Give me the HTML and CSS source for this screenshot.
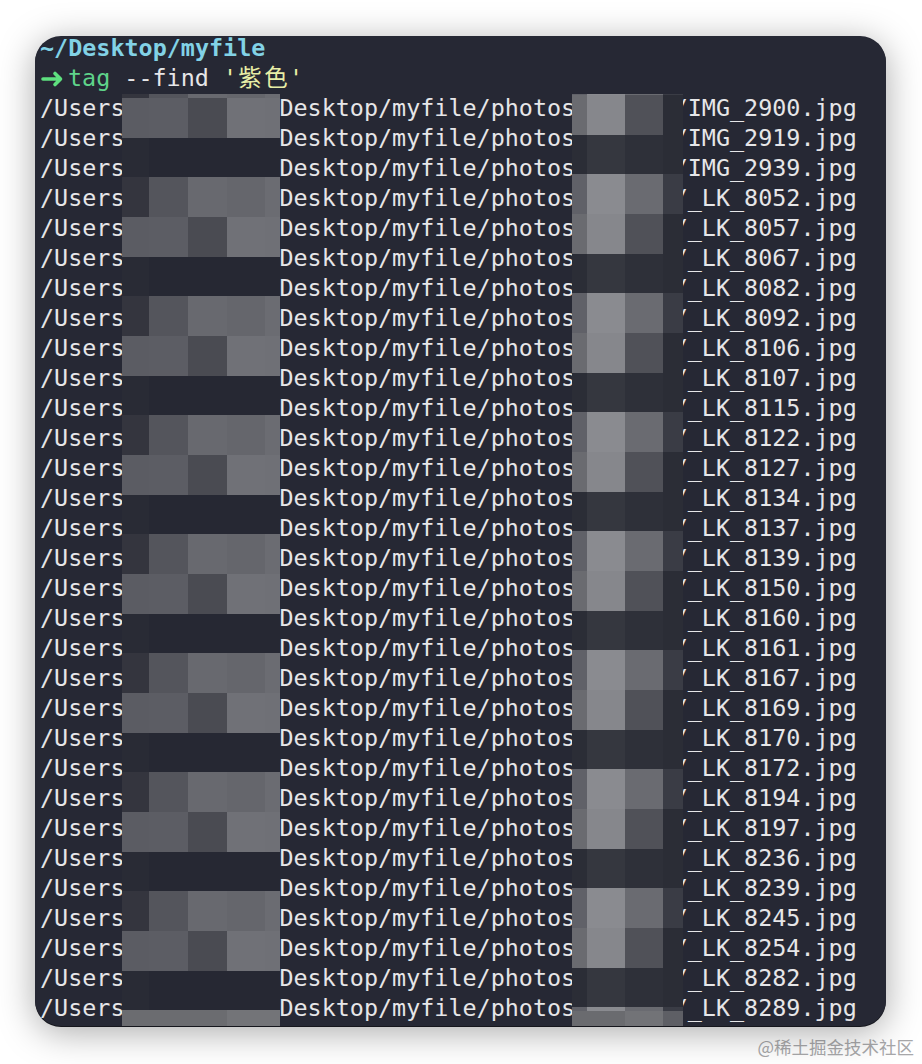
FILE: index.html
```html
<!DOCTYPE html>
<html lang="zh-CN">
<head>
    <meta charset="UTF-8">
    <title>tag --find</title>
    <link rel="stylesheet" href="styles.css">
</head>
<body>
<div class="page">
    <div class="terminal">
        <div class="screen">
            <div class="line path">~/Desktop/myfile</div>
            <div class="line"><svg class="prompt" viewBox="0 0 28 20"><path d="M3 10H20M15 4.5L20.5 10L15 15.5"/></svg><span class="cmd">tag</span> --find <span class="str">'<span class="wide">紫</span><span class="wide">色</span>'</span></div>
            <div class="line">/Users           Desktop/myfile/photos       /IMG_2900.jpg</div>
            <div class="line">/Users           Desktop/myfile/photos       /IMG_2919.jpg</div>
            <div class="line">/Users           Desktop/myfile/photos       /IMG_2939.jpg</div>
            <div class="line">/Users           Desktop/myfile/photos       /_LK_8052.jpg</div>
            <div class="line">/Users           Desktop/myfile/photos       /_LK_8057.jpg</div>
            <div class="line">/Users           Desktop/myfile/photos       /_LK_8067.jpg</div>
            <div class="line">/Users           Desktop/myfile/photos       /_LK_8082.jpg</div>
            <div class="line">/Users           Desktop/myfile/photos       /_LK_8092.jpg</div>
            <div class="line">/Users           Desktop/myfile/photos       /_LK_8106.jpg</div>
            <div class="line">/Users           Desktop/myfile/photos       /_LK_8107.jpg</div>
            <div class="line">/Users           Desktop/myfile/photos       /_LK_8115.jpg</div>
            <div class="line">/Users           Desktop/myfile/photos       /_LK_8122.jpg</div>
            <div class="line">/Users           Desktop/myfile/photos       /_LK_8127.jpg</div>
            <div class="line">/Users           Desktop/myfile/photos       /_LK_8134.jpg</div>
            <div class="line">/Users           Desktop/myfile/photos       /_LK_8137.jpg</div>
            <div class="line">/Users           Desktop/myfile/photos       /_LK_8139.jpg</div>
            <div class="line">/Users           Desktop/myfile/photos       /_LK_8150.jpg</div>
            <div class="line">/Users           Desktop/myfile/photos       /_LK_8160.jpg</div>
            <div class="line">/Users           Desktop/myfile/photos       /_LK_8161.jpg</div>
            <div class="line">/Users           Desktop/myfile/photos       /_LK_8167.jpg</div>
            <div class="line">/Users           Desktop/myfile/photos       /_LK_8169.jpg</div>
            <div class="line">/Users           Desktop/myfile/photos       /_LK_8170.jpg</div>
            <div class="line">/Users           Desktop/myfile/photos       /_LK_8172.jpg</div>
            <div class="line">/Users           Desktop/myfile/photos       /_LK_8194.jpg</div>
            <div class="line">/Users           Desktop/myfile/photos       /_LK_8197.jpg</div>
            <div class="line">/Users           Desktop/myfile/photos       /_LK_8236.jpg</div>
            <div class="line">/Users           Desktop/myfile/photos       /_LK_8239.jpg</div>
            <div class="line">/Users           Desktop/myfile/photos       /_LK_8245.jpg</div>
            <div class="line">/Users           Desktop/myfile/photos       /_LK_8254.jpg</div>
            <div class="line">/Users           Desktop/myfile/photos       /_LK_8282.jpg</div>
            <div class="line">/Users           Desktop/myfile/photos       /_LK_8289.jpg</div>
        </div>

        <!-- 打码区域 -->
        <svg class="mosaic mosaic-left" width="158" height="932">
            <defs>
                <pattern id="tileL" patternUnits="userSpaceOnUse" x="0" y="-36" width="158" height="119">
                    <rect x="0" y="0" width="27" height="40" fill="#34353e"/>
                    <rect x="27" y="0" width="39" height="40" fill="#54555c"/>
                    <rect x="66" y="0" width="39" height="40" fill="#68696f"/>
                    <rect x="105" y="0" width="38" height="40" fill="#65666c"/>
                    <rect x="143" y="0" width="15" height="40" fill="#6b6c72"/>
                    <rect x="0" y="40" width="27" height="40" fill="#5b5c63"/>
                    <rect x="27" y="40" width="39" height="40" fill="#5c5d64"/>
                    <rect x="66" y="40" width="39" height="40" fill="#4a4b52"/>
                    <rect x="105" y="40" width="38" height="40" fill="#707177"/>
                    <rect x="143" y="40" width="15" height="40" fill="#6f7076"/>
                    <rect x="0" y="80" width="27" height="39" fill="#292b35"/>
                    <rect x="27" y="80" width="131" height="39" fill="#262833"/>
                </pattern>
            </defs>
            <rect width="158" height="932" fill="url(#tileL)"/>
            <rect x="0" y="916" width="105" height="16" fill="#6b6c70"/>
            <rect x="105" y="916" width="53" height="16" fill="#737478"/>
        </svg>
        <svg class="mosaic mosaic-right" width="111" height="932">
            <defs>
                <pattern id="tileR" patternUnits="userSpaceOnUse" x="0" y="-39" width="111" height="119">
                    <rect x="0" y="0" width="15" height="40" fill="#606168"/>
                    <rect x="15" y="0" width="38" height="40" fill="#8a8b90"/>
                    <rect x="53" y="0" width="38" height="40" fill="#6a6b71"/>
                    <rect x="91" y="0" width="20" height="40" fill="#3a3c45"/>
                    <rect x="0" y="40" width="15" height="40" fill="#6a6b70"/>
                    <rect x="15" y="40" width="38" height="40" fill="#86878c"/>
                    <rect x="53" y="40" width="38" height="40" fill="#505158"/>
                    <rect x="91" y="40" width="20" height="40" fill="#2b2d36"/>
                    <rect x="0" y="80" width="15" height="39" fill="#2b2d36"/>
                    <rect x="15" y="80" width="38" height="39" fill="#35373f"/>
                    <rect x="53" y="80" width="38" height="39" fill="#2e3039"/>
                    <rect x="91" y="80" width="20" height="39" fill="#2b2d36"/>
                </pattern>
            </defs>
            <rect width="111" height="932" fill="url(#tileR)"/>
            <rect x="0" y="917" width="53" height="15" fill="#6a6b6f"/>
            <rect x="53" y="917" width="38" height="15" fill="#727377"/>
            <rect x="91" y="917" width="20" height="15" fill="#5e5f65"/>
        </svg>
    </div>
    <div class="credit">@稀土掘金技术社区</div>
</div>
</body>
</html>
```

FILE: styles.css
```css
html, body {
    margin: 0;
    padding: 0;
    background: #ffffff;
}

.page {
    width: 922px;
    height: 1064px;
    overflow: hidden;
}

.terminal {
    display: flow-root;
    position: relative;
    width: 851px;
    height: 990px;
    margin: 36px 0 0 35px;
    border-radius: 26px;
    background-color: #262834;
    box-shadow: 0 1px 0 #15161c, 0 6px 36px rgba(0, 0, 0, 0.34);
}

.screen {
    margin-top: -3px;
    padding-left: 5px;
    font: 400 23.4px/30px "DejaVu Sans Mono", "Liberation Mono", "Noto Sans CJK SC", monospace;
    color: #e6e6e8;
}

.line {
    height: 30px;
    white-space: pre;
}

.path {
    font-weight: 700;
    color: #82d2e6;
}

.prompt {
    width: 28px;
    height: 20px;
    vertical-align: -3px;
}

.prompt path {
    fill: none;
    stroke: #5ee07f;
    stroke-width: 3.6;
    stroke-linecap: round;
    stroke-linejoin: round;
}

.cmd {
    color: #5fd38a;
}

.str {
    color: #e8eea6;
}

.wide {
    display: inline-block;
    width: 2ch;
    line-height: 1;
    text-align: center;
    font-family: "Noto Sans CJK SC", sans-serif;
}

.mosaic {
    position: absolute;
    top: 58px;
}

.mosaic-left {
    left: 87px;
}

.mosaic-right {
    left: 537px;
}

.credit {
    margin-top: 9px;
    padding-right: 8px;
    text-align: right;
    font: 400 17.5px/24px "Noto Sans CJK SC", sans-serif;
    color: #a8a8aa;
}
```
